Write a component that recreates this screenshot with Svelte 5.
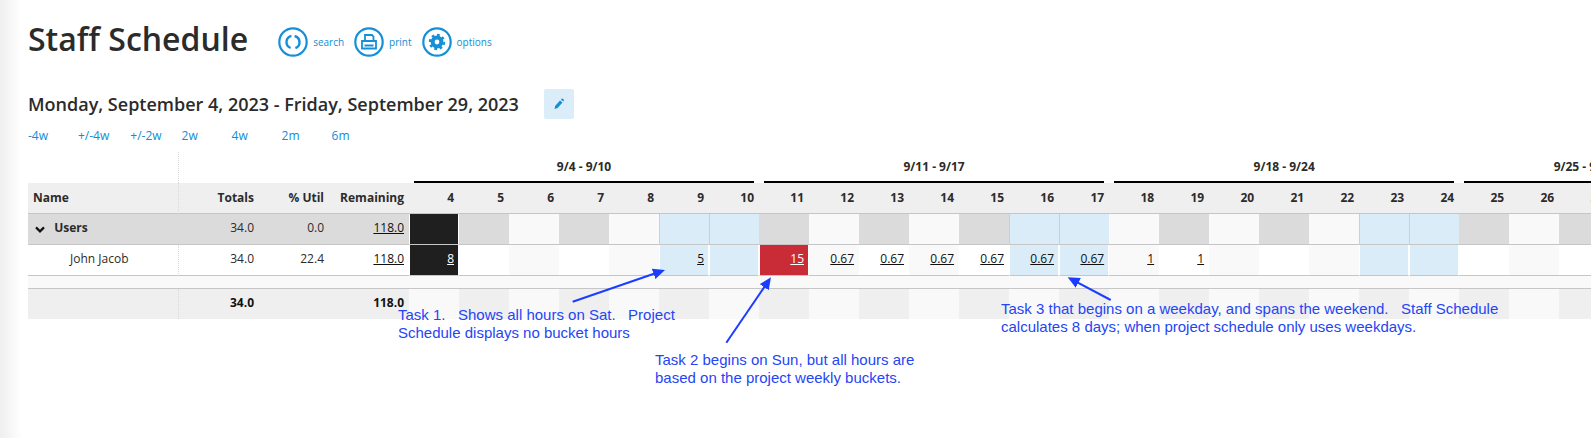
<script>
  const weeks = [
    { label: '9/4 - 9/10', days: [4, 5, 6, 7, 8, 9, 10] },
    { label: '9/11 - 9/17', days: [11, 12, 13, 14, 15, 16, 17] },
    { label: '9/18 - 9/24', days: [18, 19, 20, 21, 22, 23, 24] },
    { label: '9/25 - 9/29', days: [25, 26, 27, 28, 29] },
  ]
  const days = weeks.flatMap((w) => w.days)
  const links = ['-4w', '+/-4w', '+/-2w', '2w', '4w', '2m', '6m']
  const hours = { 4: '8', 9: '5', 11: '15', 12: '0.67', 13: '0.67', 14: '0.67', 15: '0.67', 16: '0.67', 17: '0.67', 18: '1', 19: '1' }

  // weekend columns in this data set (Sat/Sun in the source schedule)
  const isBlue = (d) => [9, 10, 16, 17, 23, 24].includes(d)
  const isEven = (d) => d % 2 === 0
  const fill = (d) => (d === 4 ? 'black' : d === 11 ? 'red' : isBlue(d) ? 'blue' : '')
</script>

<div class="page">
  <header class="top">
    <h1>Staff Schedule</h1>
    <nav class="actions">
      <a href="#search">
        <svg viewBox="0 0 30 30" width="30" height="30">
          <circle cx="15" cy="15" r="13.7" class="ring" />
          <path d="M13.4 8.8A6.4 6.4 0 0 0 12.6 21M16.6 9A6.4 6.4 0 0 1 17.4 21.2" class="line thick" />
        </svg>
        search
      </a>
      <a href="#print">
        <svg viewBox="0 0 30 30" width="30" height="30">
          <circle cx="15" cy="15" r="13.7" class="ring" />
          <path d="M11 14V8h7l1.5 1.5V14M8 14h14v7.5H8zM10.5 18.5h9" class="line" />
        </svg>
        print
      </a>
      <a href="#options">
        <svg viewBox="0 0 30 30" width="30" height="30">
          <circle cx="15" cy="15" r="13.7" class="ring" />
          <circle cx="15" cy="15" r="4.4" class="gear" />
          <circle cx="15" cy="15" r="6.9" class="teeth" pathLength="32" />
        </svg>
        options
      </a>
    </nav>
  </header>

  <div class="range">
    <h2>Monday, September 4, 2023 - Friday, September 29, 2023</h2>
    <button type="button" aria-label="edit">
      <svg viewBox="0 0 12 12" width="12" height="12">
        <path d="M1.6 11l.5-3L7 2.4l2.5 2.1-4.9 5.6zM7.9 1.4l.5-.6a.9.9 0 0 1 1.2-.1l1.1.9a.9.9 0 0 1 .1 1.2l-.5.6z" />
      </svg>
    </button>
  </div>

  <div class="links">
    {#each links as link}
      <a href="#range">{link}</a>
    {/each}
  </div>

  <table>
    <colgroup>
      <col class="c-name" />
      <col class="c-total" />
      <col class="c-util" />
      <col class="c-total" />
      {#each days as _}
        <col class="c-day" />
      {/each}
    </colgroup>
    <thead>
      <tr class="weeks">
        <th class="name"></th>
        <th colspan="3"></th>
        {#each weeks as week}
          <th colspan={week.days.length}><span>{week.label}</span></th>
        {/each}
      </tr>
      <tr class="heads">
        <th class="name left">Name</th>
        <th>Totals</th>
        <th>% Util</th>
        <th>Remaining</th>
        {#each days as d}
          <th>{d}</th>
        {/each}
      </tr>
    </thead>
    <tbody>
      <tr class="group">
        <td class="name left">
          <svg class="chevron" viewBox="0 0 10 7" width="10" height="7"><path d="M1 1.4l4 4 4-4" /></svg>
          <b>Users</b>
        </td>
        <td>34.0</td>
        <td>0.0</td>
        <td><a href="#remaining">118.0</a></td>
        {#each days as d}
          <td class={d === 4 ? 'black' : isBlue(d) ? 'blue' : isEven(d) ? 'pale' : ''}></td>
        {/each}
      </tr>
      <tr class="person">
        <td class="name left"><span class="indent">John Jacob</span></td>
        <td>34.0</td>
        <td>22.4</td>
        <td><a href="#remaining">118.0</a></td>
        {#each days as d}
          <td class={fill(d) || (isEven(d) ? 'pale' : '')}>
            {#if hours[d]}<a href="#hours">{hours[d]}</a>{/if}
          </td>
        {/each}
      </tr>
      <tr class="spacer"><td colspan={4 + days.length}></td></tr>
      <tr class="sum">
        <td class="name"></td>
        <td>34.0</td>
        <td></td>
        <td>118.0</td>
        {#each days as d}
          <td class:pale={isEven(d)}></td>
        {/each}
      </tr>
    </tbody>
  </table>

  <svg class="arrows" width="1591" height="438" viewBox="0 0 1591 438">
    <defs>
      <marker id="head" markerUnits="userSpaceOnUse" markerWidth="14" markerHeight="12" refX="8" refY="5.5" orient="auto">
        <path d="M0 0L12 5.5L0 11z" fill="#1a3dff" />
      </marker>
    </defs>
    <line x1="572.7" y1="301.7" x2="661.2" y2="271.3" marker-end="url(#head)" />
    <line x1="726.3" y1="342.7" x2="768.7" y2="280.6" marker-end="url(#head)" />
    <line x1="1110.7" y1="300" x2="1071.2" y2="279.2" marker-end="url(#head)" />
  </svg>

  <p class="note n1">Task 1.   Shows all hours on Sat.   Project
Schedule displays no bucket hours</p>
  <p class="note n2">Task 2 begins on Sun, but all hours are
based on the project weekly buckets.</p>
  <p class="note n3">Task 3 that begins on a weekday, and spans the weekend.   Staff Schedule
calculates 8 days; when project schedule only uses weekdays.</p>
</div>

<style>
  :global(body) {
    margin: 0;
    background: #fff;
  }

  .page {
    position: relative;
    width: 1591px;
    height: 438px;
    overflow: hidden;
    padding: 27px 0 0 28px;
    box-sizing: border-box;
    background: linear-gradient(to right, #efefef, #fff 22px);
    font-family: 'Open Sans', sans-serif;
    color: #2b2b2b;
  }

  .top {
    display: flex;
    align-items: flex-start;
    gap: 30px;
    height: 30px;
  }

  h1 {
    margin: -10px 0 0;
    font-size: 32px;
    line-height: 44px;
    font-weight: 600;
    color: #2b2b2b;
  }

  .actions {
    display: flex;
    gap: 10px;
  }

  .actions a {
    display: flex;
    align-items: center;
    gap: 5px;
    font-size: 10px;
    color: #0f8ed8;
    text-decoration: none;
  }

  .ring {
    fill: none;
    stroke: #148fd8;
    stroke-width: 2.2;
  }

  .line {
    fill: none;
    stroke: #148fd8;
    stroke-width: 1.8;
  }

  .thick {
    stroke-width: 2.4;
  }

  .gear {
    fill: none;
    stroke: #148fd8;
    stroke-width: 4;
  }

  .teeth {
    fill: none;
    stroke: #148fd8;
    stroke-width: 2.6;
    stroke-dasharray: 2 2;
  }

  .range {
    display: flex;
    align-items: center;
    gap: 25px;
    margin-top: 32px;
  }

  h2 {
    margin: 0;
    font-size: 18px;
    line-height: 30px;
    font-weight: 600;
    color: #2b2b2b;
  }

  button {
    display: flex;
    align-items: center;
    justify-content: center;
    width: 30px;
    height: 30px;
    padding: 0;
    border: 0;
    border-radius: 2px;
    background: #dbedf8;
  }

  button path {
    fill: #148fd8;
  }

  .links {
    display: flex;
    height: 16px;
    margin-top: 9px;
    font-size: 12px;
    line-height: 16px;
  }

  .links a {
    min-width: 30px;
    margin-right: 20px;
    color: #0f8ed8;
    text-decoration: none;
  }

  .links a:nth-child(2) {
    margin-right: 21px;
  }

  table {
    table-layout: fixed;
    width: 1681px;
    margin-top: 8px;
    border-collapse: separate;
    border-spacing: 0;
    font-size: 12px;
  }

  .c-name {
    width: 151px;
  }

  .c-total {
    width: 80px;
  }

  .c-util {
    width: 70px;
  }

  .c-day {
    width: 50px;
  }

  th,
  td {
    padding: 0 5px 3px;
    text-align: right;
    box-sizing: border-box;
  }

  .left {
    text-align: left;
  }

  .name {
    border-right: 1px dotted #d8d8d8;
  }

  td a {
    color: #111;
  }

  .weeks th {
    height: 31px;
    padding-bottom: 0;
    text-align: center;
    vertical-align: bottom;
    font-size: 12px;
    font-weight: 700;
  }

  .weeks th span {
    display: block;
    height: 26px;
    line-height: 23px;
    border-bottom: 2px solid #000;
  }

  .heads th {
    height: 31px;
    padding-bottom: 2px;
    background: #efefef;
    border-bottom: 1px solid #c6c6c6;
    font-weight: 700;
  }

  .group td {
    height: 31px;
    background: #dbdbdb;
    border-bottom: 1px solid #c6c6c6;
  }

  .group td.pale {
    background: #f9f9f9;
  }

  .group td.blue {
    background: #d9ecf8;
    border-left: 1px solid #cfcfcf;
  }

  .group td.black {
    background: #1f1f1f;
    border-left: 1px solid #fff;
    border-right: 1px solid #fff;
  }

  .group b {
    margin-left: 6px;
    font-weight: 700;
  }

  .chevron {
    margin-left: 2px;
    vertical-align: -1px;
  }

  .chevron path {
    fill: none;
    stroke: #111;
    stroke-width: 2.2;
  }

  .person td {
    height: 31px;
    background: #fff;
    border-bottom: 1px solid #c6c6c6;
  }

  .person td.pale {
    background: #f9f9f9;
  }

  .person td.blue,
  .person td.black,
  .person td.red {
    border-left: 1px solid #fff;
    border-right: 1px solid #fff;
    padding-right: 4px;
  }

  .person td.blue {
    background: #d9ecf8;
  }

  .person td.black {
    background: #1f1f1f;
  }

  .person td.red {
    background: #c92c37;
  }

  .person td.black a,
  .person td.red a {
    color: #fff;
  }

  .indent {
    margin-left: 37px;
  }

  .spacer td {
    height: 13px;
    padding: 0;
    background: #f9f9f9;
    border-bottom: 1px solid #c6c6c6;
  }

  .sum td {
    height: 30px;
    background: #efefef;
    font-weight: 700;
    color: #111;
  }

  .sum td.pale {
    background: #f9f9f9;
  }

  .arrows {
    position: absolute;
    top: 0;
    left: 0;
    pointer-events: none;
  }

  .arrows line {
    stroke: #1a3dff;
    stroke-width: 2;
  }

  .note {
    position: absolute;
    margin: 0;
    font-family: 'Liberation Sans', Arial, sans-serif;
    font-size: 15px;
    line-height: 18px;
    white-space: pre;
    color: #2545f5;
  }

  .n1 {
    left: 398px;
    top: 306px;
  }

  .n2 {
    left: 655px;
    top: 351px;
  }

  .n3 {
    left: 1001px;
    top: 300px;
  }
</style>
